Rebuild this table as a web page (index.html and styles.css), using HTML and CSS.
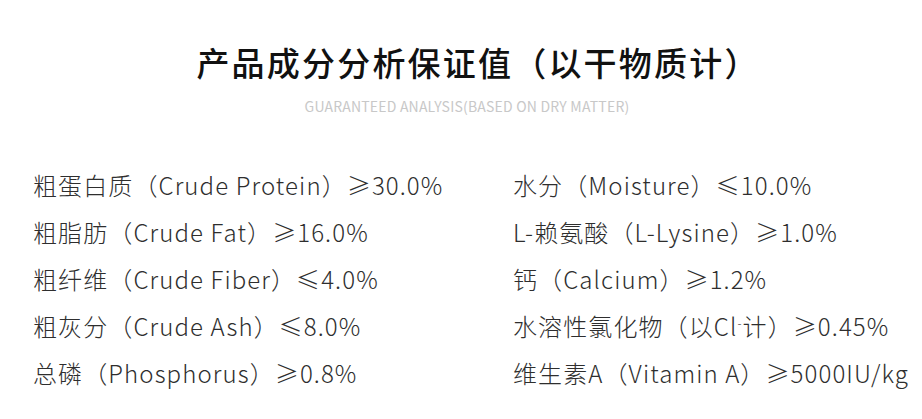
FILE: index.html
```html
<!DOCTYPE html>
<html lang="zh-CN">
<head>
<meta charset="utf-8">
<link rel="stylesheet" href="styles.css">
</head>
<body>
<div class="page">
  <header class="head">
    <h1 class="title">产品成分分析保证值（以干物质计）</h1>
    <p class="subtitle">GUARANTEED ANALYSIS(BASED ON DRY MATTER)</p>
  </header>
  <div class="grid">
    <ul class="col">
      <li>粗蛋白质（Crude Protein）≥30.0%</li>
      <li>粗脂肪（Crude Fat）≥16.0%</li>
      <li>粗纤维（Crude Fiber）≤4.0%</li>
      <li>粗灰分（Crude Ash）≤8.0%</li>
      <li>总磷（Phosphorus）≥0.8%</li>
    </ul>
    <ul class="col">
      <li>水分（Moisture）≤10.0%</li>
      <li>L-赖氨酸（L-Lysine）≥1.0%</li>
      <li>钙（Calcium）≥1.2%</li>
      <li>水溶性氯化物（以Cl<sup>-</sup>计）≥0.45%</li>
      <li>维生素A（Vitamin A）≥5000IU/kg</li>
    </ul>
  </div>
</div>
</body>
</html>
```
FILE: styles.css
```css
* { box-sizing: border-box; }
html, body { margin: 0; padding: 0; background: #fff; }
body {
  font-family: "Noto Sans CJK SC", "Noto Sans", sans-serif;
  color: #333;
  width: 922px;
  height: 419px;
  overflow: hidden;
}
.page { padding-top: 38px; }
.head { text-align: center; padding-left: 12px; }
.title {
  margin: 0;
  padding-left: 22px;
  font-size: 33px;
  font-weight: 500;
  color: #111;
  line-height: 48px;
  letter-spacing: 2.2px;
}
.subtitle {
  margin: 12px 0 0;
  font-size: 14px;
  line-height: 16px;
  color: #c8c8c8;
  letter-spacing: 0.2px;
}
.grid {
  display: grid;
  grid-template-columns: 480px 1fr;
  padding-left: 33px;
  margin-top: 47px;
}
.col {
  list-style: none;
  margin: 0;
  padding: 0;
}
.col li {
  font-size: 24px;
  font-weight: 300;
  line-height: 47px;
  letter-spacing: 1.1px;
  white-space: nowrap;
  color: #2e2e2e;
}
.col li sup {
  font-size: 12px;
  vertical-align: 8px;
  line-height: 0;
}
```
